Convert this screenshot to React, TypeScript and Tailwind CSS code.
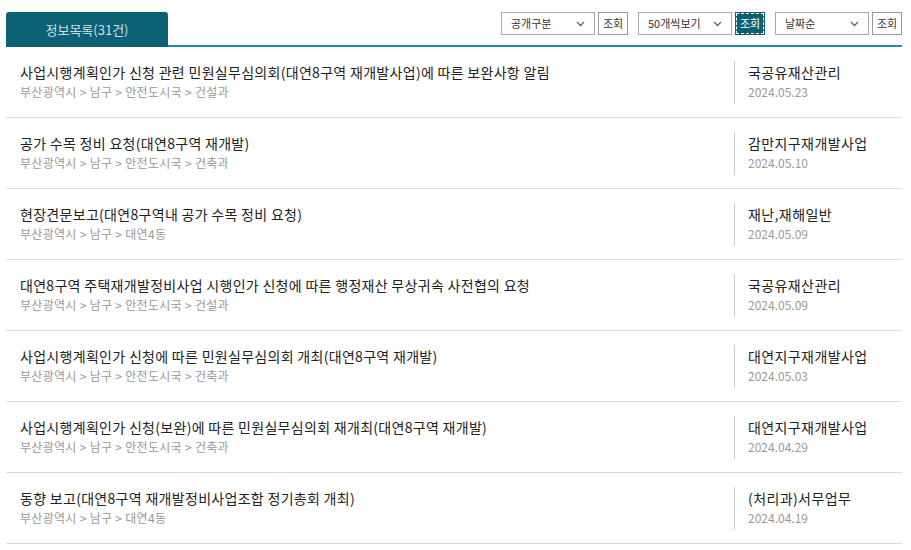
import React from "react";

const rows = [
  { t: "사업시행계획인가 신청 관련 민원실무심의회(대연8구역 재개발사업)에 따른 보완사항 알림", s: "부산광역시 > 남구 > 안전도시국 > 건설과", c: "국공유재산관리", d: "2024.05.23" },
  { t: "공가 수목 정비 요청(대연8구역 재개발)", s: "부산광역시 > 남구 > 안전도시국 > 건축과", c: "감만지구재개발사업", d: "2024.05.10" },
  { t: "현장견문보고(대연8구역내 공가 수목 정비 요청)", s: "부산광역시 > 남구 > 대연4동", c: "재난,재해일반", d: "2024.05.09" },
  { t: "대연8구역 주택재개발정비사업 시행인가 신청에 따른 행정재산 무상귀속 사전협의 요청", s: "부산광역시 > 남구 > 안전도시국 > 건설과", c: "국공유재산관리", d: "2024.05.09" },
  { t: "사업시행계획인가 신청에 따른 민원실무심의회 개최(대연8구역 재개발)", s: "부산광역시 > 남구 > 안전도시국 > 건축과", c: "대연지구재개발사업", d: "2024.05.03" },
  { t: "사업시행계획인가 신청(보완)에 따른 민원실무심의회 재개최(대연8구역 재개발)", s: "부산광역시 > 남구 > 안전도시국 > 건축과", c: "대연지구재개발사업", d: "2024.04.29" },
  { t: "동향 보고(대연8구역 재개발정비사업조합 정기총회 개최)", s: "부산광역시 > 남구 > 대연4동", c: "(처리과)서무업무", d: "2024.04.19" },
];

function Select({ label }: { label: string }) {
  return (
    <div className="flex h-[23px] w-[94px] items-center justify-between border border-[#aaa] bg-white pl-[9px] pr-[9px] text-[11px] text-[#333]">
      <span>{label}</span>
      <svg width="9" height="6" viewBox="0 0 9 6" fill="none">
        <path d="M1 1l3.5 3.5L8 1" stroke="#666" strokeWidth="1.3" />
      </svg>
    </div>
  );
}

function Btn({ active }: { active?: boolean }) {
  return active ? (
    <div className="flex h-[23px] w-[30px] items-center justify-center bg-[#0d5f74] p-[1px]">
      <div className="flex h-full w-full items-center justify-center border border-dashed border-white text-[11px] text-white">
        조회
      </div>
    </div>
  ) : (
    <div className="flex h-[23px] w-[30px] items-center justify-center border border-[#999] bg-white text-[11px] text-[#333]">
      조회
    </div>
  );
}

export default function App() {
  return (
    <div
      className="h-[550px] w-[911px] overflow-hidden bg-white pl-[6px] pr-[9px]"
      style={{ fontFamily: '"Noto Sans CJK KR", "Noto Sans", sans-serif' }}
    >
      <div className="flex items-end pt-[12px]">
        <div className="flex h-[35px] w-[162px] items-center justify-center rounded-t-[3px] bg-[#0c6175] text-[13px] text-[#cfe0e5]">
          정보목록(31건)
        </div>
        <div className="relative flex h-[35px] flex-1 justify-end border-b-[2px] border-[#1b8eaa]">
          <div className="flex h-[23px] items-start gap-[3px]">
            <Select label="공개구분" />
            <Btn />
            <div className="w-[4px]" />
            <Select label="50개씩보기" />
            <Btn active />
            <div className="w-[4px]" />
            <Select label="날짜순" />
            <Btn />
          </div>
        </div>
      </div>
      <div>
        {rows.map((r, i) => (
          <div key={i} className="flex h-[71px] items-center border-b border-[#ddd]">
            <div className="flex flex-1 flex-col pb-[1px] pl-[14px]">
              <div className="text-[14px] leading-[20px] tracking-[0.3px] text-[#222]">{r.t}</div>
              <div className="text-[12px] leading-[20px] tracking-[0.3px] text-[#999]">{r.s}</div>
            </div>
            <div className="flex h-[43px] w-[168px] flex-col justify-center border-l border-[#ccc] pl-[13px]">
              <div className="text-[14px] leading-[20px] tracking-[0.4px] text-[#222]">{r.c}</div>
              <div className="text-[12px] leading-[20px] text-[#999]">{r.d}</div>
            </div>
          </div>
        ))}
      </div>
    </div>
  );
}
